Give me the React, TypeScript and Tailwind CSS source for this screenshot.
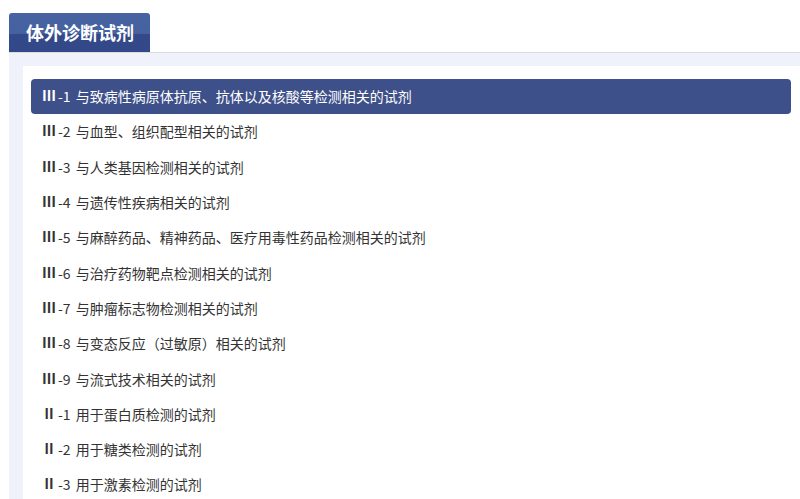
import React, { useState } from 'react';

const items = [
  ['Ⅲ', '1', '与致病性病原体抗原、抗体以及核酸等检测相关的试剂'],
  ['Ⅲ', '2', '与血型、组织配型相关的试剂'],
  ['Ⅲ', '3', '与人类基因检测相关的试剂'],
  ['Ⅲ', '4', '与遗传性疾病相关的试剂'],
  ['Ⅲ', '5', '与麻醉药品、精神药品、医疗用毒性药品检测相关的试剂'],
  ['Ⅲ', '6', '与治疗药物靶点检测相关的试剂'],
  ['Ⅲ', '7', '与肿瘤标志物检测相关的试剂'],
  ['Ⅲ', '8', '与变态反应（过敏原）相关的试剂'],
  ['Ⅲ', '9', '与流式技术相关的试剂'],
  ['Ⅱ', '1', '用于蛋白质检测的试剂'],
  ['Ⅱ', '2', '用于糖类检测的试剂'],
  ['Ⅱ', '3', '用于激素检测的试剂'],
];

export default function App() {
  const [active, setActive] = useState(0);

  return (
    <div
      className="w-[800px] h-[499px] overflow-hidden bg-white"
      style={{ fontFamily: '"Microsoft YaHei", "Noto Sans CJK SC", "Noto Sans", sans-serif' }}
    >
      <div className="pt-[13px] pl-[9px] flex">
        <div className="h-[39px] w-[141px] rounded-t-[3px] bg-[linear-gradient(to_bottom,#4863a1_0%,#4561a0_54%,#33498a_54%,#324888_100%)] flex items-center pl-[17px] pb-[1px] text-white font-bold text-[18px]">
          体外诊断试剂
        </div>
      </div>
      <div className="ml-[9px] border-t border-[#dcdcdc] bg-[#eff2fa] pt-[13px] pl-[14px] h-full">
        <div className="bg-white pt-[13px] pl-[8px] pr-[9px] h-full">
          {items.map(([roman, num, label], i) => (
            <div
              key={i}
              onClick={() => setActive(i)}
              className={`h-[35.3px] flex items-center pl-[11px] text-[14px] rounded-[4px] cursor-pointer ${
                i === active ? 'bg-[#3e5089] text-white' : 'text-[#333]'
              }`}
            >
              <span className="font-['Liberation_Serif','Noto_Sans_CJK_SC',serif] text-[14px] font-bold mr-[2px]">{roman}</span>
              <span>-{num}</span>
              <span className="ml-[5px]">{label}</span>
            </div>
          ))}
        </div>
      </div>
    </div>
  );
}
